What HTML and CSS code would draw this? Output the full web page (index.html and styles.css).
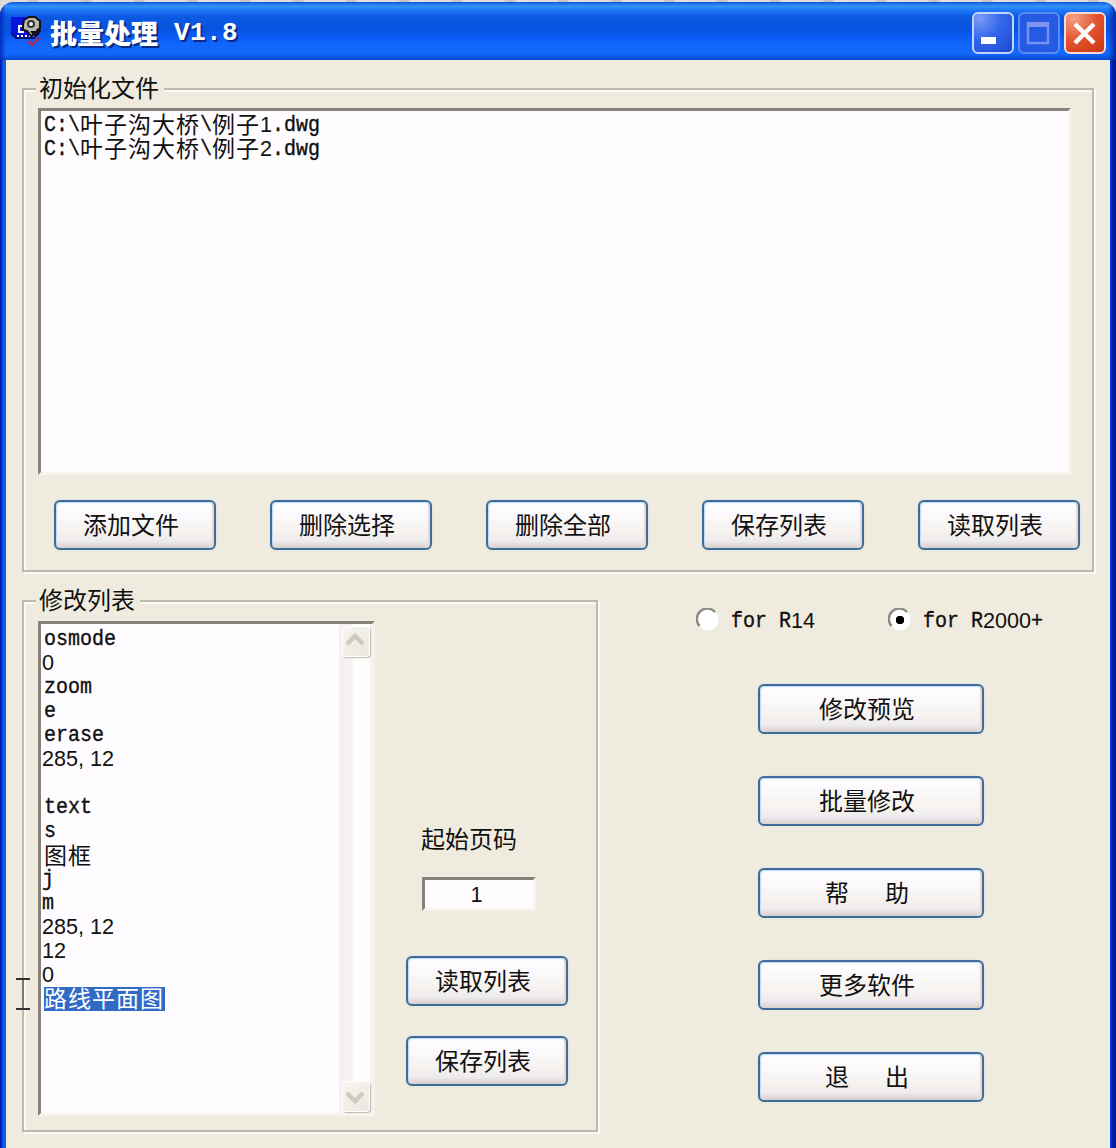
FILE: index.html
```html
<!DOCTYPE html>
<html lang="zh-CN">
<head>
<meta charset="utf-8">
<title>批量处理 V1.8</title>
<link rel="stylesheet" href="styles.css">
</head>
<body>
<div class="window">
  <header class="titlebar">
    <svg class="app-icon" width="32" height="32" viewBox="0 0 32 32">
      <path d="M1 2h16v13h12v4l-5 4H6l-5-5z" fill="#0b13df"/>
      <path d="M1 18l5 5h18l5-5" fill="none" stroke="#07107c" stroke-width="2"/>
      <path d="M13 11H9v6h5" fill="none" stroke="#fff" stroke-width="2"/>
      <path d="M7 21h17" stroke="#fff" stroke-width="2" stroke-dasharray="2 2"/>
      <path d="M14 5l5-3h6l5 4v7l-4 4h-4l2 3-3 1-4-5-4-1v-5z" fill="#b9b7b0" stroke="#111" stroke-width="2"/>
      <circle cx="21" cy="9" r="3" fill="#eee" stroke="#333" stroke-width="2"/>
      <path d="M27 14l3 2-3 3-3 1" fill="none" stroke="#111" stroke-width="2"/>
      <path d="M18 26l4 4 8-8" fill="none" stroke="#c81f49" stroke-width="2"/>
    </svg>
    <h1 class="title">批量处理<span class="title-version"> V1.8</span></h1>
    <div class="controls">
      <span class="control"><svg width="42" height="42"><path d="M9 25h15v7H9z" fill="#fff"/></svg></span>
      <span class="control disabled"><svg width="42" height="42"><path d="M10 12h20v19H10z" fill="none" stroke="#7890f4" stroke-width="2.5"/><path d="M9 10h22v5H9z" fill="#8294f2"/></svg></span>
      <span class="control close"><svg width="42" height="42"><path d="M11 12l19 19M30 12L11 31" stroke="#fff" stroke-width="4.5"/></svg></span>
    </div>
  </header>
  <main class="client">
    <fieldset class="group files">
      <legend>初始化文件</legend>
      <div class="sunken file-list">
        <div class="line"><span class="mono">C:\</span><span class="cjk">叶子沟大桥</span><span class="mono">\</span><span class="cjk">例子</span><span class="num">1</span><span class="mono">.dwg</span></div>
        <div class="line"><span class="mono">C:\</span><span class="cjk">叶子沟大桥</span><span class="mono">\</span><span class="cjk">例子</span><span class="num">2</span><span class="mono">.dwg</span></div>
      </div>
      <div class="button-row">
        <button class="btn">添加文件</button>
        <button class="btn">删除选择</button>
        <button class="btn">删除全部</button>
        <button class="btn">保存列表</button>
        <button class="btn">读取列表</button>
      </div>
    </fieldset>
    <div class="lower">
      <fieldset class="group edits">
        <legend>修改列表</legend>
        <div class="edits-body">
          <div class="sunken command-list">
            <div class="commands">
              <div class="line"><span class="mono">osmode</span></div>
              <div class="line raised"><span class="num">0</span></div>
              <div class="line"><span class="mono">zoom</span></div>
              <div class="line"><span class="mono">e</span></div>
              <div class="line"><span class="mono">erase</span></div>
              <div class="line raised"><span class="num">285<span class="comma">,</span>12</span></div>
              <div class="line"></div>
              <div class="line"><span class="mono">text</span></div>
              <div class="line"><span class="mono">s</span></div>
              <div class="line"><span class="cjk">图框</span></div>
              <div class="line outdent"><span class="mono">j</span></div>
              <div class="line outdent"><span class="mono">m</span></div>
              <div class="line raised"><span class="num">285<span class="comma">,</span>12</span></div>
              <div class="line raised"><span class="num">12</span></div>
              <div class="line raised"><span class="num">0</span></div>
              <div class="line"><span class="cjk selected">路线平面图</span></div>
            </div>
            <div class="scrollbar">
              <span class="scroll-btn"><svg width="28" height="28"><path d="M4 17l8-8 8 8" fill="none" stroke="#cdcac2" stroke-width="4.5"/></svg></span>
              <span class="scroll-btn"><svg width="28" height="28"><path d="M4 11l8 8 8-8" fill="none" stroke="#cdcac2" stroke-width="4.5"/></svg></span>
            </div>
          </div>
          <div class="page-tools">
            <label class="page-label">起始页码</label>
            <div class="sunken page-input"><span class="num">1</span></div>
            <button class="btn">读取列表</button>
            <button class="btn">保存列表</button>
          </div>
        </div>
      </fieldset>
      <section class="actions">
        <div class="radios">
          <label class="radio"><svg width="24" height="24"><circle cx="12" cy="12" r="10.5" fill="#fff"/><path d="M3.5 18A10 10 0 0 1 19 4" fill="none" stroke="#8e8b83" stroke-width="2.5"/></svg><span class="mono">for R</span><span class="num">14</span></label>
          <label class="radio"><svg width="24" height="24"><circle cx="12" cy="12" r="10.5" fill="#fff"/><path d="M3.5 18A10 10 0 0 1 19 4" fill="none" stroke="#8e8b83" stroke-width="2.5"/><path d="M10 8h4l2 2v4l-2 2h-4l-2-2v-4z" fill="#000"/></svg><span class="mono">for R</span><span class="num">2000</span><span class="mono">+</span></label>
        </div>
        <div class="action-buttons">
          <button class="btn">修改预览</button>
          <button class="btn">批量修改</button>
          <button class="btn spaced"><span>帮</span><span>助</span></button>
          <button class="btn">更多软件</button>
          <button class="btn spaced"><span>退</span><span>出</span></button>
        </div>
      </section>
    </div>
  </main>
  <svg class="text-cursor" width="16" height="34"><path d="M0 2h14M7 2v30M0 32h14" fill="none" stroke="#333" stroke-width="2"/><path d="M7 3v28" stroke="#777" stroke-width="2"/></svg>
</div>
</body>
</html>
```
FILE: styles.css
```css
* { box-sizing: border-box; }
body {
  margin: 0;
  height: 1148px;
  overflow: hidden;
  background: #dfddd5;
  color: #111;
  font: 24px/24px "Noto Sans CJK SC", sans-serif;
}
.window {
  position: relative;
  height: 1148px;
  padding: 2px 6px 0;
  background: linear-gradient(90deg, #0018b8 0, #0018b8 1px, #155be4 3px, #155be4 6px, #efecdf 6px, #efecdf 1110px, #0a3de0 1110px, #0025b0 1112px, #001087 1116px);
}
.window::before {
  content: "";
  position: absolute;
  inset: 0 0 auto;
  height: 12px;
  background: repeating-linear-gradient(90deg, #dedcd4 0 27px, #c6c5c1 29px 37px, #e2e0d8 40px 53px);
}
.titlebar {
  position: relative;
  display: flex;
  align-items: center;
  height: 58px;
  margin: 0 -6px;
  padding: 4px 10px 0;
  border-radius: 13px 13px 0 0;
  background:
    linear-gradient(90deg, #0030c0 0, transparent 6px, transparent 1108px, #0028a8 1116px),
    linear-gradient(#0758dc 0, #3494ff 4px, #1b72f4 9px, #0b59e2 15px, #0853df 27px, #0a5cf4 35px, #1167fc 43px, #1167fa 52px, #0748cc 58px);
}
.app-icon { margin-top: -4px; }
.title {
  display: flex;
  flex: 1;
  margin: 0 0 0 8px;
  color: #fff;
  font-size: 27px;
  line-height: 34px;
  font-weight: 900;
  text-shadow: 2px 2px 0 #0b2b80;
}
.title-version {
  font-family: "Liberation Mono", monospace;
  font-size: 26px;
  letter-spacing: 0.4px;
  white-space: pre;
}
.controls { display: flex; gap: 4px; }
.control {
  width: 42px;
  height: 42px;
  border: 2px solid #c4d3fb;
  border-radius: 6px;
  background: radial-gradient(circle at 15% 10%, #7d9bf5, #3468ec 45%, #1b48ce);
}
.control svg { display: block; margin: -2px; }
.control.disabled { border-color: #5a8bf5; background: #255be3; }
.control.close {
  border-color: #f5dad6;
  background: radial-gradient(circle at 20% 10%, #f4a084, #e45330 50%, #c7350e);
}
.client { padding: 16px 16px 0; }
.group {
  min-width: 0;
  margin: 0;
  padding: 0;
  border: 2px solid #bdb9ae;
  box-shadow: 2px 2px 0 #fbfaf3, inset 2px 2px 0 #fbfaf3;
}
.group legend {
  height: 26px;
  margin-left: 12px;
  padding: 0 5px 0 3px;
  line-height: 21px;
  background: #efecdf;
}
.files { width: 1072px; height: 496px; }
.sunken {
  border: 3px solid;
  border-color: #86837a #f7f3ec #f7f3ec #86837a;
  background: #fffcff;
}
.file-list {
  width: 1033px;
  height: 367px;
  margin: 6px 0 0 14px;
  padding: 2px 0 0 3px;
}
.line { display: flex; height: 24px; white-space: nowrap; }
.mono, .num { display: block; height: 24px; white-space: pre; }
.mono {
  font-family: "Liberation Mono", monospace;
  font-size: 20px;
  transform: scaleY(1.1);
  -webkit-text-stroke: 0.35px #111;
}
.cjk { height: 24px; font-size: 23px; letter-spacing: 1px; line-height: 21px; }
.num { font-family: "Liberation Sans", sans-serif; font-size: 21.6px; }
.comma { letter-spacing: 6px; }
.raised { transform: translate(-2px, -1px); }
.outdent { transform: translateX(-2px); }
.button-row {
  display: flex;
  gap: 54px;
  margin: 25px 0 0 30px;
}
.btn {
  flex: none;
  width: 162px;
  height: 50px;
  padding: 0 8px 2px 0;
  border: 2px solid #3f6c9c;
  border-radius: 6px;
  background: linear-gradient(#fff 0, #fbf9fc 12px, #f5f2ee 30px, #eeebee 39px, #d8cfca 46px);
  box-shadow: 0 0 1px #8ab0d2, inset 1px 1px 1px #bdd8f3, inset -2px 0 1px #e4dad6;
  color: #111;
  font: inherit;
}
.lower { display: flex; margin-top: 16px; }
.edits { width: 576px; height: 544px; }
.edits-body { display: flex; padding: 7px 0 0 14px; }
.command-list {
  display: flex;
  justify-content: space-between;
  width: 337px;
  height: 495px;
}
.commands { padding: 4px 0 0 3px; }
.selected {
  height: 24px;
  padding-right: 1px;
  color: #fff;
  background: #316ac5;
  transform: translateY(-1px);
}
.scrollbar {
  display: flex;
  flex-direction: column;
  justify-content: space-between;
  width: 33px;
  padding: 2px 2px 1px 3px;
  background: linear-gradient(90deg, #f6eff4 0 13px, #fffffa 15px 22px, #fffcff 24px 31px, #f3efe9 32px);
}
.scroll-btn {
  width: 28px;
  height: 31px;
  border: 1px solid #fff;
  border-radius: 4px;
  background: linear-gradient(135deg, #f7f5ef, #eae7df);
  box-shadow: 1px 1px 1px #bbb8b0;
}
.scroll-btn svg { display: block; }
.page-tools {
  display: flex;
  flex-direction: column;
  align-items: flex-start;
  padding: 205px 0 0 31px;
}
.page-label { margin-left: 15px; }
.page-input {
  display: flex;
  justify-content: center;
  width: 114px;
  height: 34px;
  margin: 27px 0 45px 16px;
  padding: 3px 5px 0 0;
}
.page-tools .btn + .btn { margin-top: 30px; }
.actions { padding: 20px 0 0 98px; }
.radios { display: flex; gap: 73px; }
.radio { display: flex; align-items: center; height: 24px; }
.radio svg { margin-right: 11px; }
.radio .mono, .radio .num { line-height: 26px; }
.action-buttons {
  display: flex;
  flex-direction: column;
  gap: 42px;
  margin: 52px 0 0 62px;
}
.action-buttons .btn { width: 226px; }
.spaced {
  display: flex;
  align-items: center;
  justify-content: center;
  gap: 36px;
}
.text-cursor {
  position: absolute;
  left: 16px;
  top: 977px;
}
```
